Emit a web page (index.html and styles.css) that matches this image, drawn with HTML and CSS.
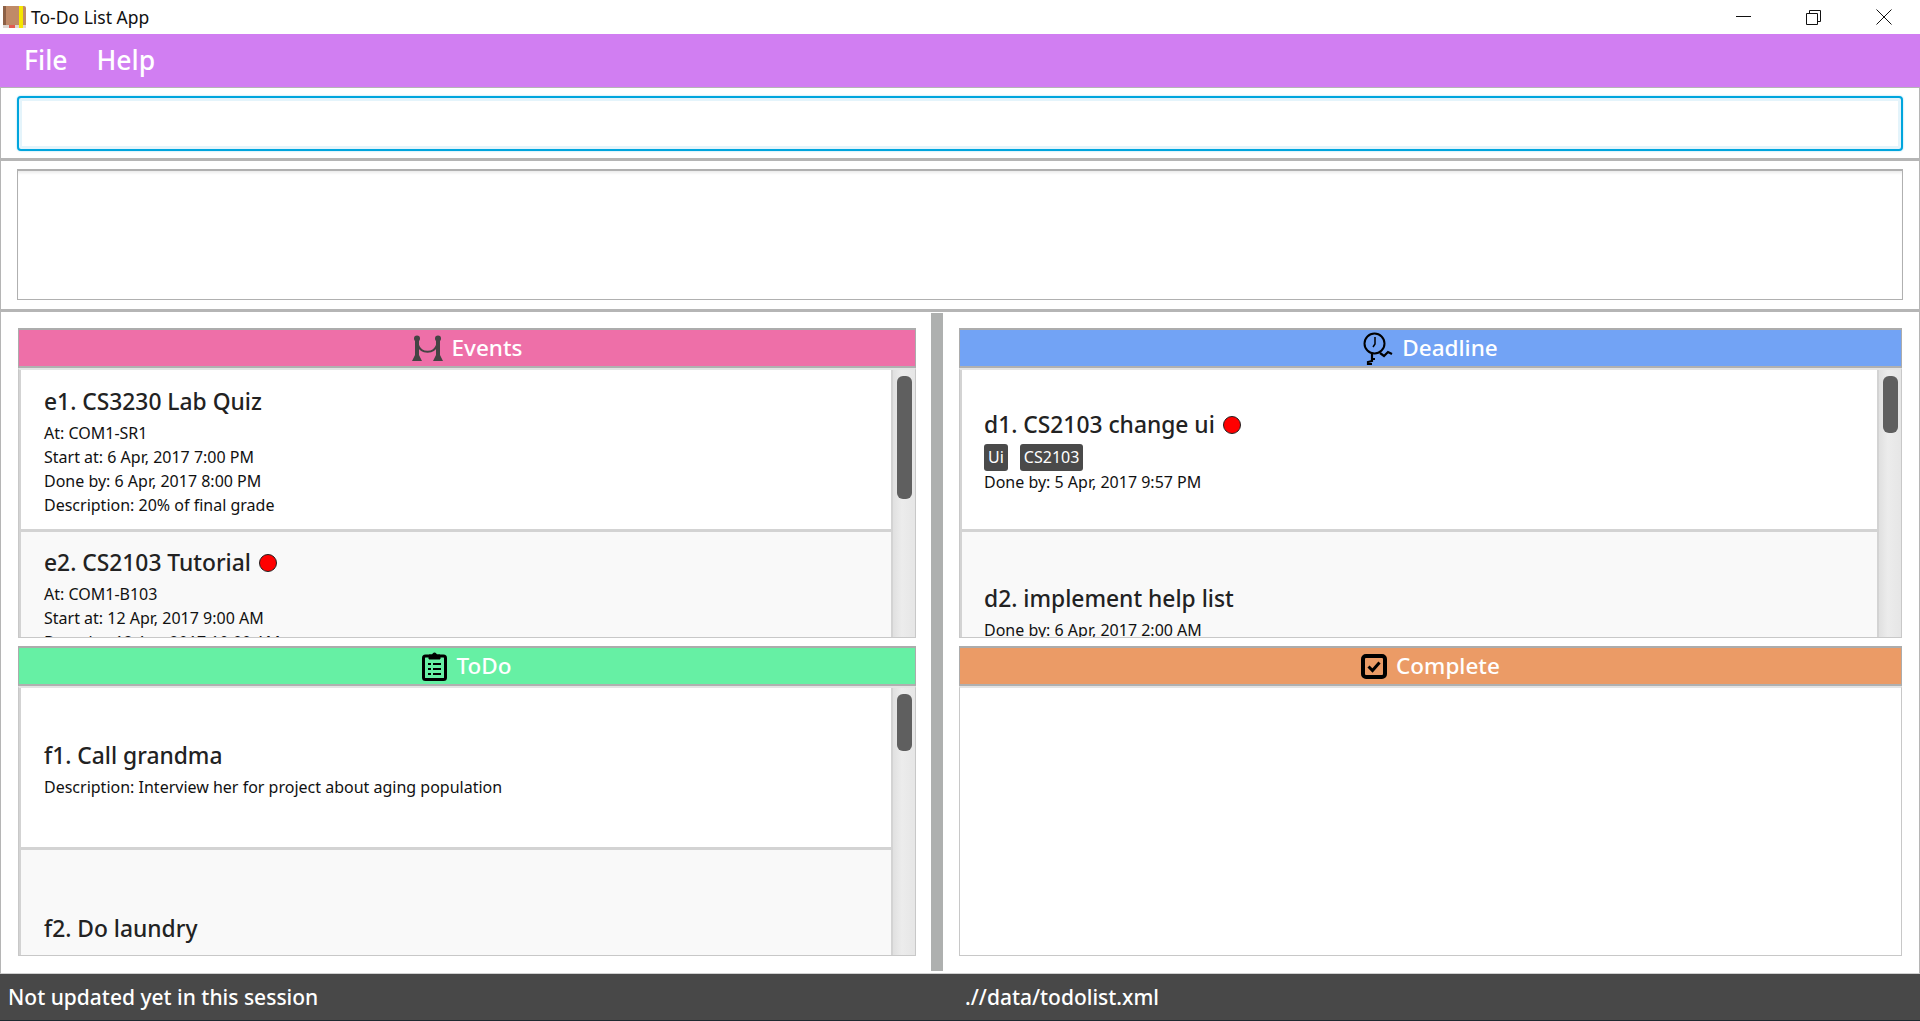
FILE: index.html
```html
<!DOCTYPE html>
<html lang="en">
<head>
    <meta charset="UTF-8">
    <meta name="viewport" content="width=device-width, initial-scale=1.0">
    <title>To-Do List App</title>
    <link rel="stylesheet" href="styles.css">
</head>
<body>
<div class="titlebar">
    <svg class="app-icon" width="23" height="23" viewBox="0 0 23 23">
        <rect x="0" y="0" width="23" height="22" rx="2" fill="#c08a68"/>
        <rect x="0" y="0" width="3" height="22" fill="#8d6146"/>
        <rect x="16" y="0" width="4" height="22" fill="#f6e600"/>
        <rect x="0" y="19" width="23" height="3" fill="#ddd8d2"/>
        <rect x="6" y="19" width="6" height="3" fill="#e25a50"/>
        <rect x="16" y="19" width="4" height="3" fill="#f6e600"/>
    </svg>
    <span class="app-name">To-Do List App</span>
    <div class="window-buttons">
        <svg width="16" height="16" viewBox="0 0 16 16"><path d="M0 7.500h15" stroke="#111" fill="none"/></svg>
        <svg width="16" height="16" viewBox="0 0 16 16"><path d="M.5 4.500h11v11H.5zM3.500 4.500v-3h11v11h-3" stroke="#111" fill="none"/></svg>
        <svg width="16" height="16" viewBox="0 0 16 16"><path d="M.5.500l15 15M15.500.500l-15 15" stroke="#111" fill="none"/></svg>
    </div>
</div>

<div class="menubar">
    <span class="menu-item">File</span>
    <span class="menu-item">Help</span>
</div>

<div class="command-section">
    <input class="command-box" type="text">
</div>

<div class="result-section">
    <div class="result-box"></div>
</div>

<div class="main">
    <div class="pane pane-left">
        <section class="panel">
            <div class="panel-header events">
                <svg class="header-icon" width="31" height="26" viewBox="0 0 31 26">
                    <circle cx="5" cy="3.500" r="3" fill="#444"/>
                    <circle cx="26" cy="3.500" r="3" fill="#444"/>
                    <path d="M3 6h4v14H3zM24 6h4v14h-4z" fill="#444"/>
                    <path d="M0 26l3-6h4l3 6zM21 26l3-6h4l3 6z" fill="#444"/>
                    <path d="M6 10c3 9 16 9 19 0" stroke="#444" stroke-width="2" fill="none"/>
                </svg>
                <span>Events</span>
            </div>
            <div class="panel-body">
                <div class="list">
                    <div class="card">
                        <div class="card-title">e1. CS3230 Lab Quiz</div>
                        <div class="card-line">At: COM1-SR1</div>
                        <div class="card-line">Start at: 6 Apr, 2017 7:00 PM</div>
                        <div class="card-line">Done by: 6 Apr, 2017 8:00 PM</div>
                        <div class="card-line">Description: 20% of final grade</div>
                    </div>
                    <div class="card card-alt card-top">
                        <div class="card-title">e2. CS2103 Tutorial <span class="dot"></span></div>
                        <div class="card-line">At: COM1-B103</div>
                        <div class="card-line">Start at: 12 Apr, 2017 9:00 AM</div>
                        <div class="card-line">Done by: 12 Apr, 2017 10:00 AM</div>
                    </div>
                </div>
                <div class="scrollbar"><div class="thumb thumb-long"></div></div>
            </div>
        </section>
        <section class="panel panel-lower">
            <div class="panel-header todo">
                <svg class="header-icon" width="25" height="30" viewBox="0 0 25 30">
                    <rect x="1.500" y="5" width="22" height="23.500" rx="2" fill="none" stroke="#000" stroke-width="3"/>
                    <path d="M7 8V4h3.500a2 2 0 0 1 4 0H18v4z" fill="#000" stroke="#000"/>
                    <path d="M6 12h3v2H6zM6 17h3v2H6zM6 22h3v2H6zM11 12h8v2h-8zM11 17h8v2h-8zM11 22h8v2h-8z" fill="#000"/>
                </svg>
                <span>ToDo</span>
            </div>
            <div class="panel-body">
                <div class="list">
                    <div class="card">
                        <div class="card-title">f1. Call grandma</div>
                        <div class="card-line">Description: Interview her for project about aging population</div>
                    </div>
                    <div class="card card-alt">
                        <div class="card-title">f2. Do laundry</div>
                    </div>
                </div>
                <div class="scrollbar"><div class="thumb thumb-short"></div></div>
            </div>
        </section>
    </div>

    <div class="splitter"></div>

    <div class="pane pane-right">
        <section class="panel">
            <div class="panel-header deadline">
                <svg class="header-icon" width="30" height="33" viewBox="0 0 30 33">
                    <circle cx="11.500" cy="11.500" r="10" fill="none" stroke="#000" stroke-width="2"/>
                    <path d="M12 5v7l-2 3" stroke="#000" stroke-width="1.500" fill="none"/>
                    <path d="M9 22v7l-4 1v2h4M9 27h3" stroke="#000" stroke-width="2.200" fill="none"/>
                    <path d="M17 21l4 3 4-4 4 2" stroke="#000" stroke-width="2.200" fill="none"/>
                </svg>
                <span>Deadline</span>
            </div>
            <div class="panel-body">
                <div class="list">
                    <div class="card">
                        <div class="card-title">d1. CS2103 change ui <span class="dot"></span></div>
                        <div class="tags">
                            <span class="tag">Ui</span>
                            <span class="tag">CS2103</span>
                        </div>
                        <div class="card-line card-line-tight">Done by: 5 Apr, 2017 9:57 PM</div>
                    </div>
                    <div class="card card-alt">
                        <div class="card-title">d2. implement help list</div>
                        <div class="card-line">Done by: 6 Apr, 2017 2:00 AM</div>
                    </div>
                </div>
                <div class="scrollbar"><div class="thumb thumb-short"></div></div>
            </div>
        </section>
        <section class="panel panel-lower">
            <div class="panel-header complete">
                <svg class="header-icon" width="26" height="25" viewBox="0 0 26 25">
                    <rect x="2" y="2" width="22" height="21" rx="3" fill="none" stroke="#000" stroke-width="4"/>
                    <path d="M7.500 12.500l4 4 7-8" stroke="#000" stroke-width="3" fill="none"/>
                </svg>
                <span>Complete</span>
            </div>
            <div class="panel-body panel-empty"></div>
        </section>
    </div>
</div>

<div class="statusbar">
    <span class="status-left">Not updated yet in this session</span>
    <span class="status-right">.//data/todolist.xml</span>
</div>
</body>
</html>
```

FILE: styles.css
```css
* {
    box-sizing: border-box;
}

html, body {
    height: 100%;
}

body {
    margin: 0;
    height: 1021px;
    overflow: hidden;
    display: flex;
    flex-direction: column;
    font-family: "Noto Sans", "Open Sans", sans-serif;
    color: #1c1c1c;
    background-color: #fff;
}

.titlebar {
    height: 34px;
    display: flex;
    align-items: center;
    padding-left: 3px;
    background-color: #fff;
}

.app-icon {
    margin-right: 5px;
}

.app-name {
    font-size: 17.500px;
    color: #111;
}

.window-buttons {
    margin-left: auto;
    display: flex;
    gap: 54px;
    padding-right: 28px;
}

.menubar {
    height: 53px;
    display: flex;
    align-items: center;
    gap: 29px;
    padding-left: 24px;
    padding-bottom: 2px;
    background-color: #d17ef2;
}

.menu-item {
    font-size: 26.500px;
    font-weight: 500;
    color: #fff;
}

.command-section {
    height: 74px;
    padding: 8px 16px 7px 16px;
    border: 1px solid #b5b5b5;
    border-width: 1px 1px 3px 1px;
}

.command-box {
    display: block;
    width: 100%;
    height: 55px;
    border: 2px solid #00a5dd;
    border-radius: 4px;
    background-color: #fff;
    box-shadow: inset 0 0 0 3px #e4f4fb, 0 0 2px #8fd8f4;
    outline: none;
}

.result-section {
    height: 151px;
    padding: 8px 16px;
    border: 1px solid #b5b5b5;
    border-width: 0 1px 3px 1px;
}

.result-box {
    height: 131px;
    border: 2px solid #b0b0b0;
    border-width: 2px 1px 1px 1px;
    box-shadow: inset 0 3px 3px -1px #ececec;
}

.main {
    flex: 1;
    display: flex;
    min-height: 0;
    border-left: 1px solid #b5b5b5;
    border-right: 1px solid #b5b5b5;
    border-bottom: 1px solid #d0d0d0;
}

.pane {
    flex: 1;
    min-width: 0;
    display: flex;
    flex-direction: column;
    padding-top: 16px;
    padding-bottom: 17px;
}

.pane-left {
    flex: none;
    width: 930px;
    padding-left: 17px;
    padding-right: 15px;
}

.pane-right {
    padding-left: 16px;
    padding-right: 17px;
}

.splitter {
    flex: none;
    width: 12px;
    margin-top: 1px;
    margin-bottom: 2px;
    background-color: #aeb0af;
}

.panel {
    height: 310px;
    display: flex;
    flex-direction: column;
}

.panel-lower {
    height: 310px;
    margin-top: 8px;
}

.panel-header {
    height: 40px;
    flex: none;
    display: flex;
    align-items: center;
    justify-content: center;
    gap: 9px;
    font-size: 22.500px;
    font-weight: 500;
    color: #fff;
    border: 1px solid #acacac;
    border-top-width: 2px;
    border-bottom: 2px solid #b0b0b0;
}

.panel-header span {
    padding-bottom: 2px;
}

.events {
    background-color: #ee6fa8;
}

.deadline {
    background-color: #72a3f5;
}

.todo {
    background-color: #66f0a4;
}

.complete {
    background-color: #eb9b66;
}

.panel-body {
    flex: 1;
    min-height: 0;
    display: flex;
    overflow: hidden;
    border: 1px solid #c8c8c8;
    border-top: 2px solid #e4e4e4;
}

.list {
    flex: 1;
    min-width: 0;
    overflow: hidden;
    border-left: 2px solid #d3d3d3;
}

.card {
    height: 162px;
    display: flex;
    flex-direction: column;
    justify-content: center;
    padding-top: 2px;
    padding-left: 23px;
    background-color: #fff;
    border-bottom: 3px solid #d3d3d3;
}

.pane-right .card {
    padding-left: 22px;
}

.card-alt {
    padding-top: 0;
    background-color: #f9f9f9;
}

.card-top {
    justify-content: flex-start;
    padding-top: 14px;
}

.card-title {
    font-size: 22.800px;
    font-weight: 500;
    line-height: 34px;
    flex: none;
    display: flex;
    align-items: center;
    gap: 8px;
    margin-bottom: 2px;
    color: #222;
}

.card-line {
    font-size: 16px;
    line-height: 24px;
    flex: none;
    color: #111;
}

.card-line-tight {
    line-height: 22px;
}

.dot {
    width: 18px;
    height: 18px;
    border-radius: 50%;
    background-color: #f00;
    border: 1px solid #222;
}

.tags {
    display: flex;
    gap: 12px;
}

.tag {
    height: 27px;
    line-height: 27px;
    padding: 0 4px;
    font-size: 16px;
    color: #fff;
    background-color: #4a4a4a;
    border-radius: 3px;
}

.scrollbar {
    flex: none;
    width: 24px;
    padding: 6px 3px 0 4px;
    background: linear-gradient(to right, #e0e0e0, #ececec 40%, #e6e6e6);
    border-left: 2px solid #d3d3d3;
}

.thumb {
    width: 15px;
    background-color: #5f5f5f;
    border-radius: 6px;
}

.thumb-long {
    height: 123px;
}

.thumb-short {
    height: 57px;
}

.panel-empty {
    background-color: #fff;
}

.statusbar {
    height: 47px;
    flex: none;
    display: flex;
    align-items: center;
    padding-left: 8px;
    background-color: #484848;
    border-bottom: 1px solid #1e2a30;
    font-size: 21px;
    font-weight: 500;
    color: #fff;
}

.status-left {
    width: 957px;
}
```
